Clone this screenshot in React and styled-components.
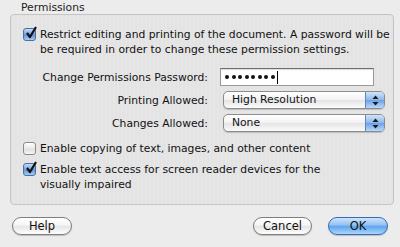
import React from 'react'
import styled, { createGlobalStyle } from 'styled-components'

const Global = createGlobalStyle`
    html, body {
        margin: 0;
        padding: 0;
        background: #ececec;
    }
    body {
        font-family: "DejaVu Sans", "Liberation Sans", sans-serif;
        font-size: 10.75px;
        color: #111;
    }
`

const Dialog = styled.div`
    width: 400px;
    height: 247px;
    box-sizing: border-box;
    padding: 1px 6px 0 10px;
    display: flex;
    flex-direction: column;
`
const Legend = styled.div`
    padding-left: 11px;
    height: 13px;
    line-height: 13px;
    color: #222;
`
const Group = styled.div`
    width: 384px;
    height: 191px;
    box-sizing: border-box;
    border: 1px solid #c4c4c4;
    border-radius: 4px;
    background: repeating-linear-gradient(90deg, #e3e3e3 0 2px, #e6e6e6 2px 4px);
    padding: 12px 0 0 12px;
    display: flex;
    flex-direction: column;
`
const CheckRow = styled.label`
    display: flex;
    align-items: flex-start;
    gap: 4px;
    line-height: 15px;
    margin-top: ${p => p.top || 0}px;
`
const Box = styled.span`
    flex: none;
    width: 13px;
    height: 13px;
    margin-top: 1px;
    box-sizing: border-box;
    border: 1px solid ${p => (p.checked ? '#4a6fa0' : '#8a8a8a')};
    border-radius: 3px;
    background: ${p => (p.checked
        ? 'linear-gradient(#c9dcf4, #6f9fdc 50%, #5b8fd6 51%, #a9cdf5)'
        : 'linear-gradient(#ffffff, #e8e8e8 50%, #dcdcdc 51%, #f6f6f6)')};
    position: relative;
    svg {
        position: absolute;
        left: 1px;
        top: -3px;
    }
`
const Text = styled.span`
    width: ${p => p.w || 'auto'};
`
const Form = styled.div`
    display: grid;
    grid-template-columns: 185px 1fr;
    column-gap: 12px;
    row-gap: 5px;
    margin-top: 11px;
    align-items: center;
`
const Label = styled.span`
    text-align: right;
`
const Field = styled.div`
    width: 154px;
    height: 18px;
    box-sizing: border-box;
    background: #fff;
    border: 1px solid #9a9a9a;
    border-top-color: #6e6e6e;
    box-shadow: inset 0 1px 1px rgba(0,0,0,0.15);
    display: flex;
    align-items: center;
    padding-left: 4px;
    gap: 1px;
`
const Dot = styled.span`
    width: 4px;
    height: 4px;
    border-radius: 50%;
    background: #111;
    margin-right: 1.5px;
`
const Caret = styled.span`
    width: 1px;
    height: 13px;
    background: #000;
`
const Popup = styled.div`
    margin-left: 3px;
    width: 162px;
    height: 18px;
    box-sizing: border-box;
    border: 1px solid #8c8c8c;
    border-radius: 5px;
    background: linear-gradient(#ffffff, #f2f2f2 50%, #e4e4e4 51%, #fbfbfb);
    box-shadow: 0 1px 1px rgba(0,0,0,0.18);
    display: flex;
    align-items: center;
    overflow: hidden;
`
const PopupValue = styled.span`
    flex: 1;
    padding-left: 8px;
    line-height: 16px;
`
const Arrows = styled.span`
    width: 18px;
    height: 100%;
    border-left: 1px solid #5f86bf;
    background: linear-gradient(#d3e4f8, #8db6ea 50%, #6aa0e6 51%, #b8dafc);
    display: flex;
    align-items: center;
    justify-content: center;
`
const Footer = styled.div`
    display: flex;
    align-items: center;
    margin-top: 12px;
    padding-left: 2px;
    padding-right: 6px;
`
const Button = styled.button`
    width: ${p => p.w}px;
    height: 18px;
    margin-left: ${p => p.gap || 0}px;
    font-family: inherit;
    font-size: 11.5px;
    color: #111;
    border: 1px solid ${p => (p.primary ? '#3b69b5' : '#7e7e7e')};
    border-radius: 9px;
    padding: 0;
    background: ${p => (p.primary
        ? 'linear-gradient(#cfe4fb, #8fc0f4 45%, #5ea5ee 52%, #a9d6fc)'
        : 'linear-gradient(#ffffff, #f5f5f5 45%, #e6e6e6 52%, #fdfdfd)')};
    box-shadow: 0 1px 1px rgba(0,0,0,0.2);
`
const Spacer = styled.div`
    flex: 1;
`

const Check = () => (
    <svg width="12" height="13" viewBox="0 0 12 13">
        <path d="M2 7 L5 11 L11 1" fill="none" stroke="#111" strokeWidth="2.2" strokeLinejoin="round" />
    </svg>
)

const Checkbox = ({ checked }) => (
    <Box checked={checked}>{checked && <Check />}</Box>
)

const UpDown = () => (
    <svg width="7" height="11" viewBox="0 0 7 11">
        <path d="M3.5 0.5 L6.5 4 L0.5 4 Z" fill="#1a1a1a" />
        <path d="M3.5 10.5 L6.5 7 L0.5 7 Z" fill="#1a1a1a" />
    </svg>
)

export default function App() {
    return (
        <Dialog>
            <Global />
            <Legend>Permissions</Legend>
            <Group>
                <CheckRow>
                    <Checkbox checked />
                    <Text w="358px">Restrict editing and printing of the document. A password will be be required in order to change these permission settings.</Text>
                </CheckRow>
                <Form>
                    <Label>Change Permissions Password:</Label>
                    <Field>
                        {Array.from({ length: 8 }).map((_, i) => <Dot key={i} />)}
                        <Caret />
                    </Field>
                    <Label>Printing Allowed:</Label>
                    <Popup>
                        <PopupValue>High Resolution</PopupValue>
                        <Arrows><UpDown /></Arrows>
                    </Popup>
                    <Label>Changes Allowed:</Label>
                    <Popup>
                        <PopupValue>None</PopupValue>
                        <Arrows><UpDown /></Arrows>
                    </Popup>
                </Form>
                <CheckRow top={9}>
                    <Checkbox />
                    <Text>Enable copying of text, images, and other content</Text>
                </CheckRow>
                <CheckRow top={6}>
                    <Checkbox checked />
                    <Text w="300px">Enable text access for screen reader devices for the visually impaired</Text>
                </CheckRow>
            </Group>
            <Footer>
                <Button w={60}>Help</Button>
                <Spacer />
                <Button w={59}>Cancel</Button>
                <Button w={60} gap={16} primary>OK</Button>
            </Footer>
        </Dialog>
    )
}
